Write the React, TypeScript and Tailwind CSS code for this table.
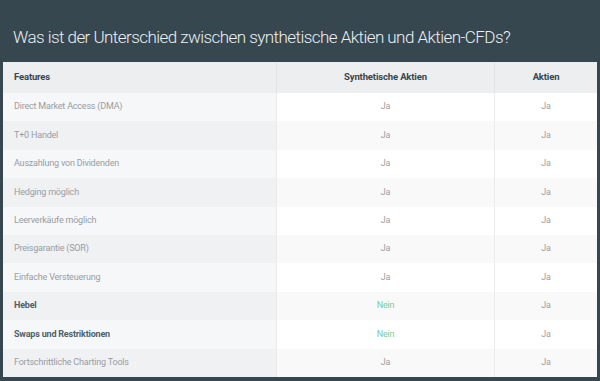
const rows = [
  { name: "Direct Market Access (DMA)", synth: "Ja", aktien: "Ja" },
  { name: "T+0 Handel", synth: "Ja", aktien: "Ja" },
  { name: "Auszahlung von Dividenden", synth: "Ja", aktien: "Ja" },
  { name: "Hedging möglich", synth: "Ja", aktien: "Ja" },
  { name: "Leerverkäufe möglich", synth: "Ja", aktien: "Ja" },
  { name: "Preisgarantie (SOR)", synth: "Ja", aktien: "Ja" },
  { name: "Einfache Versteuerung", synth: "Ja", aktien: "Ja" },
  { name: "Hebel", synth: "Nein", aktien: "Ja", bold: true },
  { name: "Swaps und Restriktionen", synth: "Nein", aktien: "Ja", bold: true },
  { name: "Fortschrittliche Charting Tools", synth: "Ja", aktien: "Ja" },
];

export default function App() {
  return (
    <main className="w-[600px] h-[381px] bg-[#37474f] overflow-hidden font-['Roboto',sans-serif]">
      {/* TITLE */}
      <h2 className="h-[62px] pt-[25px] pl-[13px] text-[17px] font-light tracking-[-0.55px] text-[#eceff1] leading-[24px] whitespace-nowrap">
        Was ist der Unterschied zwischen synthetische Aktien und Aktien-CFDs?
      </h2>

      {/* TABLE */}
      <div className="mx-[3px] bg-white">
        <div className="grid grid-cols-[274px_218px_102px] h-[31px] bg-[#eceef0] text-[9.5px] font-bold tracking-[-0.15px] text-[#37474f]">
          <div className="flex items-center pl-[11px] border-r border-[#e2e4e6]">Features</div>
          <div className="flex items-center justify-center border-r border-[#e2e4e6]">Synthetische Aktien</div>
          <div className="flex items-center justify-center">Aktien</div>
        </div>

        {rows.map((row, i) => (
          <div
            key={row.name}
            className={`grid grid-cols-[274px_218px_102px] h-[28.4px] text-[9px] tracking-[-0.2px] ${
              i % 2 === 0 ? "bg-white" : "bg-[#f9f9f9]"
            }`}
          >
            <div
              className={`flex items-center pl-[11px] border-r border-[#ebebeb] ${
                i % 2 === 0 ? "bg-[#f6f7f8]" : "bg-[#f0f1f3]"
              } ${row.bold ? "font-bold text-[#4f616b]" : "text-[#979da3]"}`}
            >
              {row.name}
            </div>
            <div
              className={`flex items-center justify-center border-r border-[#ebebeb] ${
                row.synth === "Nein" ? "text-[#76cba2]" : "text-[#a0a0a0]"
              }`}
            >
              {row.synth}
            </div>
            <div className="flex items-center justify-center text-[#a0a0a0]">{row.aktien}</div>
          </div>
        ))}
      </div>
    </main>
  );
}
